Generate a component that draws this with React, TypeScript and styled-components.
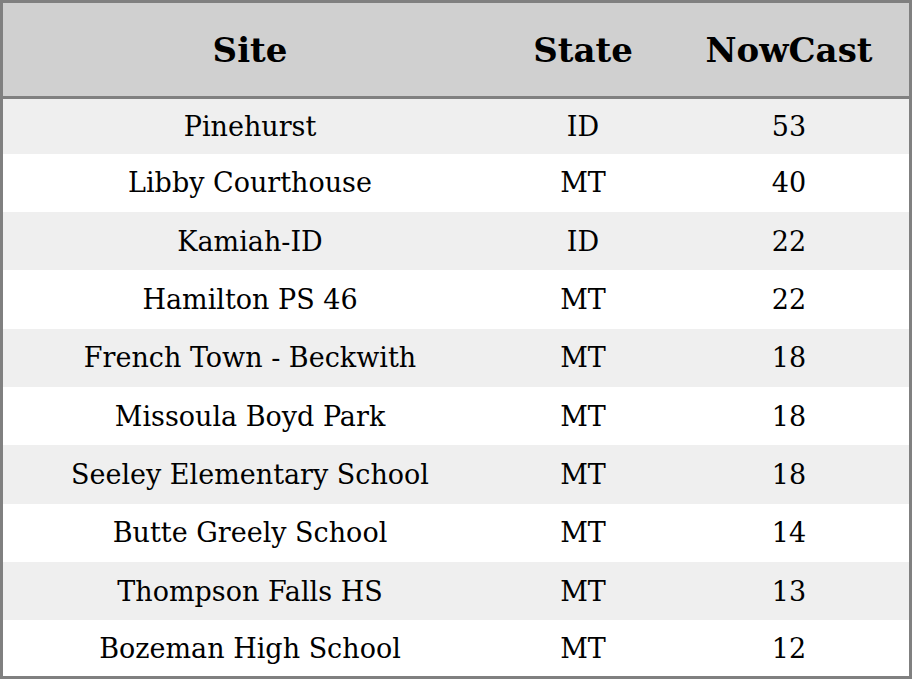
import { createGlobalStyle, styled } from "styled-components";

const GlobalStyle = createGlobalStyle`
  html, body {
    margin: 0;
    padding: 0;
    background: #ffffff;
  }
`;

const Table = styled.table`
  width: 912px;
  height: 679px;
  box-sizing: border-box;
  border: 3px solid #808080;
  border-collapse: collapse;
  table-layout: fixed;
  font-family: "DejaVu Serif", serif;
  color: #000;
`;

const HeadRow = styled.tr`
  height: 96px;
  background-color: #d0d0d0;
  border-bottom: 3px solid #808080;
`;

const HeadCell = styled.th<{ $width: number }>`
  width: ${(props) => props.$width}px;
  font-size: 34px;
  font-weight: bold;
  text-align: center;
  padding: 0;
`;

const Row = styled.tr<{ $striped: boolean }>`
  height: 58px;
  background-color: ${(props) => (props.$striped ? "#efefef" : "#ffffff")};

  &:first-child {
    height: 56px;
  }

  &:last-child {
    height: 57px;
  }
`;

const Cell = styled.td`
  font-size: 27px;
  text-align: center;
  padding: 0;
`;

const rows = [
  { site: "Pinehurst", state: "ID", nowcast: 53 },
  { site: "Libby Courthouse", state: "MT", nowcast: 40 },
  { site: "Kamiah-ID", state: "ID", nowcast: 22 },
  { site: "Hamilton PS 46", state: "MT", nowcast: 22 },
  { site: "French Town - Beckwith", state: "MT", nowcast: 18 },
  { site: "Missoula Boyd Park", state: "MT", nowcast: 18 },
  { site: "Seeley Elementary School", state: "MT", nowcast: 18 },
  { site: "Butte Greely School", state: "MT", nowcast: 14 },
  { site: "Thompson Falls HS", state: "MT", nowcast: 13 },
  { site: "Bozeman High School", state: "MT", nowcast: 12 },
];

export default function App() {
  return (
    <>
      <GlobalStyle />
      <Table>
        <thead>
          <HeadRow>
            <HeadCell $width={494}>Site</HeadCell>
            <HeadCell $width={172}>State</HeadCell>
            <HeadCell $width={240}>NowCast</HeadCell>
          </HeadRow>
        </thead>
        <tbody>
          {rows.map((r, i) => (
            <Row key={r.site} $striped={i % 2 === 0}>
              <Cell>{r.site}</Cell>
              <Cell>{r.state}</Cell>
              <Cell>{r.nowcast}</Cell>
            </Row>
          ))}
        </tbody>
      </Table>
    </>
  );
}
